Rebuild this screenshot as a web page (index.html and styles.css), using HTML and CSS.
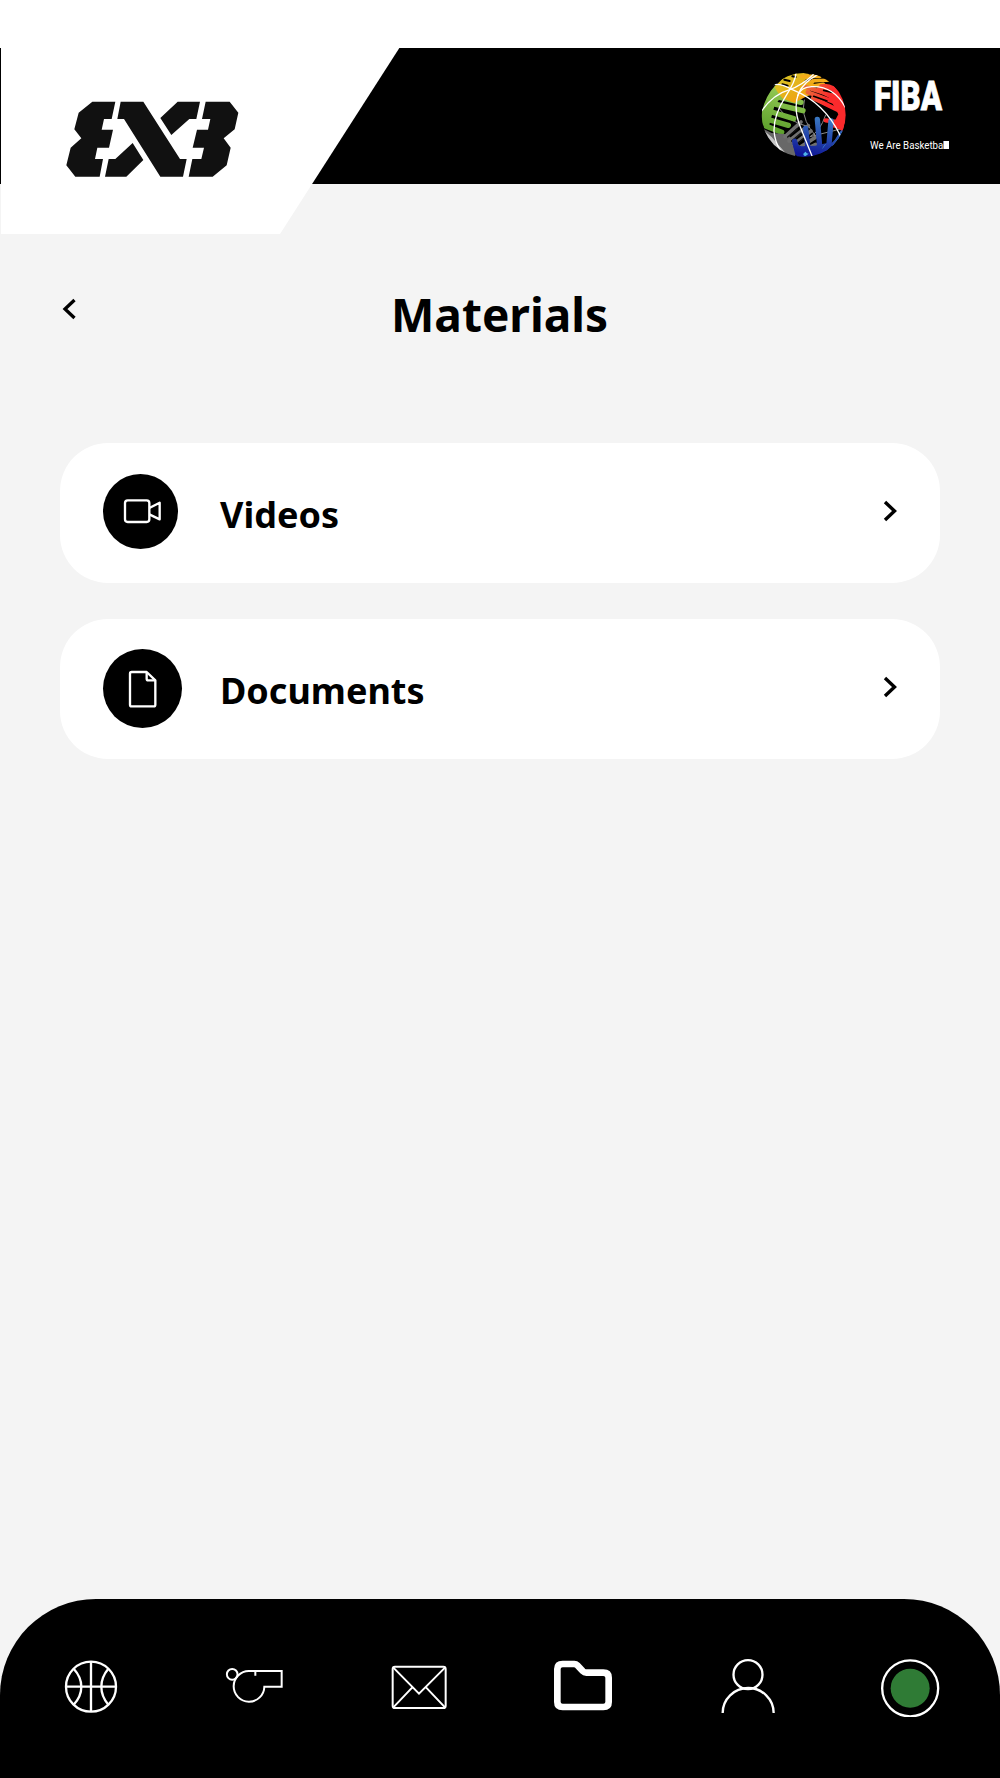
FILE: index.html
```html
<!DOCTYPE html>
<html lang="en">
<head>
    <meta charset="UTF-8">
    <meta name="viewport" content="width=device-width, initial-scale=1.0">
    <title>Materials</title>
    <link rel="stylesheet" href="styles.css">
</head>
<body>
    <header class="header">
        <svg class="logo" viewBox="0 54 1200 558">
            <polygon fill="#fff" points="3,54 1198,54 840,612 3,612"/>
            <g fill="#111">
                <polygon points="277,215 346,215 335,267 312,267 305,299 339,299 327,353 292,353 285,387 309,387 299,440 226,440 199,406 212,353 244,325 223,298 236,248"/>
                <polygon points="362,215 430,215 540,387 560,387 549,440 481,440 372,267 352,267"/>
                <polygon points="533,215 600,215 589,267 568,267 514,315 481,264"/>
                <polygon points="398,339 430,390 379,440 315,440 326,387 346,387"/>
                <polygon points="617,215 689,215 715,248 704,298 671,325 692,353 680,406 638,440 566,440 577,387 604,387 612,353 578,353 591,299 624,299 631,267 606,267"/>
            </g>
        </svg>
        <div class="brand">
            <svg class="globe" viewBox="0 0 300 300">
                <defs>
                    <clipPath id="ball"><circle cx="146" cy="150" r="126"/></clipPath>
                    <linearGradient id="yellow" gradientUnits="userSpaceOnUse" x1="90" y1="30" x2="150" y2="115">
                        <stop offset="0" stop-color="#d9c424"/>
                        <stop offset="1" stop-color="#f59a0c"/>
                    </linearGradient>
                    <linearGradient id="green" gradientUnits="userSpaceOnUse" x1="90" y1="70" x2="60" y2="210">
                        <stop offset="0" stop-color="#93c954"/>
                        <stop offset="1" stop-color="#5a9e2a"/>
                    </linearGradient>
                    <linearGradient id="red" gradientUnits="userSpaceOnUse" x1="150" y1="70" x2="250" y2="120">
                        <stop offset="0" stop-color="#e8703a"/>
                        <stop offset=".7" stop-color="#fb2a2c"/>
                    </linearGradient>
                    <linearGradient id="blue" gradientUnits="userSpaceOnUse" x1="200" y1="160" x2="175" y2="275">
                        <stop offset="0" stop-color="#3a78c2"/>
                        <stop offset="1" stop-color="#0f1696"/>
                    </linearGradient>
                </defs>
                <g clip-path="url(#ball)" stroke-linecap="round" fill="none">
                    <!-- back seams -->
                    <g stroke="#8a8a8a" stroke-width="3">
                        <path d="M148 105Q138 150 165 190L205 245"/>
                        <path d="M72 130Q100 170 160 185"/>
                        <path d="M212 150Q195 200 165 215L265 190"/>
                    </g>
                    <!-- green hand -->
                    <path d="M18 160Q24 100 62 60L84 88L58 124L40 190L22 180Z" fill="url(#green)"/>
                    <g stroke="url(#green)" stroke-width="16">
                        <path d="M55 93L138 112"/>
                        <path d="M50 115L144 137"/>
                        <path d="M40 138L116 161"/>
                        <path d="M34 162L100 181"/>
                        <path d="M34 184L80 202"/>
                    </g>
                    <!-- yellow hand -->
                    <path d="M58 66L90 34L130 22L160 26L178 52L155 94L118 114L82 100L68 82Z" fill="url(#yellow)"/>
                    <g stroke="#f3ac1a" stroke-width="11">
                        <path d="M140 34L195 34"/>
                        <path d="M165 48L228 45"/>
                        <path d="M150 66L205 58"/>
                        <path d="M134 92L162 86"/>
                    </g>
                    <g stroke="#000" stroke-width="6">
                        <path d="M82 58L98 62M88 44L104 48M112 34L122 36M152 47L168 42"/>
                    </g>
                    <!-- red hand -->
                    <path d="M196 58Q236 50 258 88Q276 120 274 165L262 200L236 175L250 148L224 100L180 76Z" fill="url(#red)"/>
                    <g stroke="url(#red)" stroke-width="13">
                        <path d="M152 66L235 92"/>
                        <path d="M158 82L240 112"/>
                        <path d="M174 99L246 134"/>
                        <path d="M212 166L255 172"/>
                        <path d="M230 180L262 188"/>
                    </g>
                    <g stroke="#000" stroke-width="5">
                        <path d="M176 94L216 108M188 116L228 137M206 76L232 82"/>
                    </g>
                    <!-- grey hand -->
                    <path d="M18 188L50 204L96 208L132 240L116 284L70 262Z" fill="#686868"/>
                    <path d="M24 194L50 216L100 274L60 260Z" fill="#c6c6c6"/>
                    <g stroke="#707070" stroke-width="11">
                        <path d="M90 215L138 171"/>
                        <path d="M102 228L160 182"/>
                        <path d="M116 238L168 198"/>
                        <path d="M130 250L180 218"/>
                        <path d="M145 256L182 238"/>
                    </g>
                    <g stroke="#111" stroke-width="4">
                        <path d="M98 216L126 192M110 228L138 204M124 238L146 220"/>
                    </g>
                    <!-- blue hand -->
                    <path d="M112 236L140 244L180 242L226 232L214 272L130 286Z" fill="url(#blue)"/>
                    <g stroke="#4fb4e8" stroke-width="10">
                        <path d="M150 268L158 262M206 252L214 242M236 240L262 204"/>
                    </g>
                    <g stroke="url(#blue)" stroke-width="16">
                        <path d="M119 229L128 264"/>
                        <path d="M152 190L160 258"/>
                        <path d="M187 163L195 255"/>
                        <path d="M228 168L222 238L204 262"/>
                        <path d="M262 204L244 232L218 256"/>
                    </g>
                    <!-- front seams -->
                    <g stroke="#fff" stroke-width="4">
                        <path d="M52 59Q78 54 112 74Q208 112 256 212"/>
                        <path d="M123 24Q122 48 92 94Q56 150 57 198Q60 232 76 256"/>
                        <path d="M190 28Q146 50 130 86Q114 130 136 186L172 275"/>
                        <path d="M128 92Q138 66 170 65Q236 62 270 126"/>
                        <path d="M20 138Q54 88 104 74Q140 62 176 28"/>
                    </g>
                </g>
            </svg>
            <svg class="wordmark" viewBox="0 0 84 80">
                <text class="fiba" x="4" y="43" textLength="68" lengthAdjust="spacingAndGlyphs">FIBA</text>
                <text class="tagline" x="0" y="82" textLength="78" lengthAdjust="spacingAndGlyphs">We Are Basketball</text>
                <rect x="73.5" y="74" width="5.5" height="8" fill="#fff"/>
            </svg>
        </div>
    </header>

    <main class="content">
        <div class="title-bar">
            <svg class="back" viewBox="0 0 14 22"><path d="M12.5 2L3 11L12.5 20" fill="none" stroke="#000" stroke-width="3.3"/></svg>
            <h1>Materials</h1>
        </div>

        <a class="card">
            <span class="card-icon">
                <svg viewBox="0 0 225 225" fill="none" stroke="#fff" stroke-width="7" stroke-linejoin="round">
                    <rect x="66" y="79" width="73" height="65" rx="8"/>
                    <path d="M139 102L170 86V136L139 121"/>
                </svg>
            </span>
            <span class="card-label">Videos</span>
            <svg class="arrow" viewBox="0 0 14 22"><path d="M2 2L11.5 11L2 20" fill="none" stroke="#000" stroke-width="3.4"/></svg>
        </a>

        <a class="card">
            <span class="card-icon large">
                <svg viewBox="0 0 237 237" fill="none" stroke="#fff" stroke-width="7" stroke-linejoin="round">
                    <path d="M86 69H131L157 94V167Q157 172 152 172H86Q81 172 81 167V74Q81 69 86 69Z"/>
                    <path d="M131 70V89Q131 94 136 94H156"/>
                </svg>
            </span>
            <span class="card-label">Documents</span>
            <svg class="arrow" viewBox="0 0 14 22"><path d="M2 2L11.5 11L2 20" fill="none" stroke="#000" stroke-width="3.4"/></svg>
        </a>
    </main>

    <nav class="bottom-nav">
        <svg viewBox="0 0 180 180" stroke-width="7">
            <circle cx="90" cy="89" r="75"/>
            <path d="M90 14V164M15 89H165M38 35Q61 60 61 89T38 143M142 35Q121 60 121 89T142 143"/>
        </svg>
        <svg viewBox="0 0 180 180" stroke-width="6">
            <circle cx="21.6" cy="52" r="16"/>
            <path d="M71.6 42H170V89H118A46 46 0 1 1 71.6 42ZM91 42V56"/>
        </svg>
        <svg viewBox="0 0 180 180" stroke-width="6">
            <rect x="11" y="29" width="159" height="124" rx="7"/>
            <path d="M13 32L90 110L168 32M13 151L70 91M168 151L111 91"/>
        </svg>
        <svg viewBox="0 0 180 180" stroke-width="20">
            <path d="M29 21H64Q69 21 73 25L89 42Q94 47 100 47H151Q167 47 167 62V135Q167 150 151 150H29Q13 150 13 135V36Q13 21 29 21Z"/>
        </svg>
        <svg viewBox="0 0 180 180" stroke-width="7">
            <circle cx="93" cy="53" r="43.5"/>
            <path d="M17 168A76.5 75 0 0 1 170 168"/>
        </svg>
        <svg viewBox="0 0 180 180" stroke-width="7">
            <circle cx="90.5" cy="94" r="84"/>
            <circle cx="90.5" cy="94" r="58.5" fill="#2f7b35" stroke="none"/>
        </svg>
    </nav>
</body>
</html>
```
FILE: styles.css
```css
* {
    box-sizing: border-box;
}
body {
    margin: 0;
    padding-top: 48px;
    height: 1778px;
    display: flex;
    flex-direction: column;
    font-family: "Noto Sans", sans-serif;
    background: linear-gradient(#fff 48px, #f4f4f4 48px);
    color: #000;
}
svg {
    display: block;
    flex-shrink: 0;
}

/* Header */
.header {
    height: 136px;
    display: flex;
    justify-content: space-between;
    align-items: flex-start;
    background-color: #000;
}
.logo {
    width: 400px;
    height: 186px;
}
.brand {
    display: flex;
    gap: 15px;
    padding: 17px 46px 0 0;
}
.globe {
    width: 100px;
    height: 100px;
}
.wordmark {
    width: 84px;
    height: 80px;
    margin-top: 2px;
    overflow: visible;
}
.fiba {
    font-family: Roboto, sans-serif;
    font-weight: 900;
    font-size: 41px;
    fill: #fff;
    stroke: #fff;
    stroke-width: 0.8px;
}
.tagline {
    font-family: Roboto, sans-serif;
    font-size: 11.5px;
    fill: #fff;
}

/* Content */
.content {
    flex: 1;
    padding: 0 60px;
}
.title-bar {
    height: 259px;
    padding-top: 95px;
    display: grid;
    grid-template-columns: 20px 1fr 21px;
    align-items: start;
}
.back {
    width: 14px;
    height: 22px;
    margin: 19px 0 0 2px;
}
h1 {
    margin: 0;
    font-size: 46px;
    line-height: 70px;
    font-weight: 700;
    text-align: center;
}
.card {
    height: 140px;
    margin-bottom: 36px;
    padding: 0 43px;
    display: grid;
    grid-template-columns: 117px 1fr 14px;
    align-items: center;
    background-color: #fff;
    border-radius: 48px;
}
.card-icon {
    width: 75px;
    height: 75px;
    margin-bottom: 3px;
    border-radius: 50%;
    background-color: #000;
}
.card-icon.large {
    width: 79px;
    height: 79px;
    margin-bottom: 2px;
}
.card-label {
    font-size: 36px;
    line-height: 50px;
    font-weight: 700;
    padding-top: 4px;
}
.arrow {
    width: 14px;
    height: 22px;
    margin-bottom: 5px;
}

/* Bottom navigation */
.bottom-nav {
    height: 179px;
    padding: 58px 59.5px 0 61.3px;
    display: flex;
    justify-content: space-between;
    align-items: flex-start;
    background-color: #000;
    border-radius: 96px 96px 0 0;
}
.bottom-nav svg {
    width: 60px;
    height: 60px;
    fill: none;
    stroke: #fff;
}
```
